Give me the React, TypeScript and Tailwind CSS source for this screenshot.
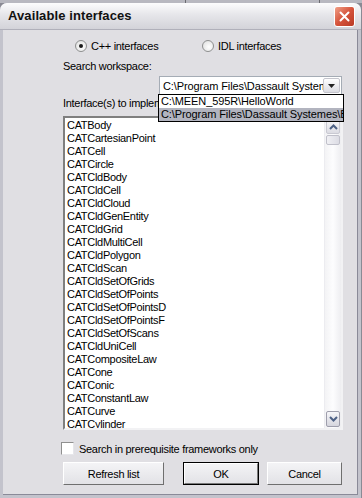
import React from 'react';

const ITEMS = [
  'CATBody', 'CATCartesianPoint', 'CATCell', 'CATCircle', 'CATCldBody', 'CATCldCell',
  'CATCldCloud', 'CATCldGenEntity', 'CATCldGrid', 'CATCldMultiCell', 'CATCldPolygon',
  'CATCldScan', 'CATCldSetOfGrids', 'CATCldSetOfPoints', 'CATCldSetOfPointsD',
  'CATCldSetOfPointsF', 'CATCldSetOfScans', 'CATCldUniCell', 'CATCompositeLaw', 'CATCone',
  'CATConic', 'CATConstantLaw', 'CATCurve', 'CATCylinder',
];

const font = "font-['Liberation_Sans',Arial,sans-serif]";

const Radio = ({ checked, label }: { checked?: boolean; label: string }) => (
  <div className="flex items-center gap-[4px] h-[13px]">
    <div className="w-[12px] h-[12px] rounded-full border border-[#8e8f8f] bg-[radial-gradient(circle_at_60%_60%,#ffffff,#dcdcdc)] flex items-center justify-center">
      {checked && <div className="w-[4px] h-[4px] rounded-full bg-[#1a1a1a]" />}
    </div>
    <span>{label}</span>
  </div>
);

const Chevron = ({ up }: { up?: boolean }) => (
  <svg width="9" height="6" viewBox="0 0 9 6">
    <polyline
      points={up ? '1,5 4.5,1.5 8,5' : '1,1 4.5,4.5 8,1'}
      fill="none"
      stroke="#4d6185"
      strokeWidth="2"
    />
  </svg>
);

const XpButton = ({ label, isDefault, w }: { label: string; isDefault?: boolean; w: string }) => (
  <button
    className={`${w} h-[23px] flex items-center justify-center text-[11px] tracking-[-0.3px] text-black bg-[linear-gradient(#f4f4f6,#e2e2e6)] border ${
      isDefault ? 'border-black' : 'border-t-white border-l-white border-b-[#6f6f6f] border-r-[#6f6f6f]'
    }`}
  >
    <span className={isDefault ? 'border-t border-l border-white w-full h-full flex items-center justify-center border-b border-r border-b-[#7a7a7a] border-r-[#7a7a7a]' : ''}>
      {label}
    </span>
  </button>
);

export default function App() {
  return (
    <div className={`w-[362px] h-[498px] bg-[#8a8a94] overflow-hidden ${font} text-black`}>
      {/* window behind */}
      <div className="h-[3px] flex bg-[#b8b8c0]">
        <div className="w-[186px] border-r border-[#6a6a70]" />
        <div className="w-[134px] border-r border-[#6a6a70]" />
      </div>

      <div className="w-[361px] h-[495px] flex flex-col rounded-t-[7px] overflow-hidden bg-[#c3c3cc]">
        {/* title bar */}
        <div className="h-[27px] shrink-0 flex items-center justify-between pl-[8px] pr-[6px] bg-[linear-gradient(#fcfcfd,#e6e6ea_45%,#d3d3d9)] border-b border-[#b0b0ba]">
          <span className="text-[13px] font-bold text-[#111] tracking-[0.1px]">Available interfaces</span>
          <div className="w-[21px] h-[21px] rounded-[3px] border border-white bg-[linear-gradient(135deg,#f0a088,#d5533b_50%,#b93a25)] flex items-center justify-center">
            <svg width="11" height="11" viewBox="0 0 11 11">
              <path d="M1.5 1.5 L9.5 9.5 M9.5 1.5 L1.5 9.5" stroke="white" strokeWidth="2" strokeLinecap="round" />
            </svg>
          </div>
        </div>

        {/* body */}
        <div className="flex-1 flex border-l-[3px] border-r-[3px] border-b-[3px] border-[#c3c3cc]">
          <div className="flex-1 relative bg-[#e0dfe3] border-r border-b border-[#8a8a98] pl-[60px] text-[11px] tracking-[-0.3px] leading-[12px]">
            {/* radios */}
            <div className="mt-[9px] flex ml-[12px]">
              <div className="w-[127px]">
                <Radio checked label="C++ interfaces" />
              </div>
              <Radio label="IDL interfaces" />
            </div>

            <div className="mt-[8px] h-[12px]">Search workspace:</div>

            {/* combo */}
            <div className="mt-[4px] ml-[96px] w-[183px] h-[19px] bg-white border border-[#a5acb5] flex items-center pl-[3px] pr-[1px] overflow-hidden">
              <span className="flex-1 whitespace-nowrap overflow-hidden tracking-[-0.1px]">C:\Program Files\Dassault System</span>
              <div className="w-[17px] h-[15px] shrink-0 bg-[linear-gradient(#ffffff,#dcdce2)] border border-[#c4c4cc] rounded-[2px] flex items-center justify-center">
                <svg width="7" height="4" viewBox="0 0 7 4">
                  <path d="M0 0 H7 L3.5 4 Z" fill="#222" />
                </svg>
              </div>
            </div>

            <div className="mt-[2px] h-[12px]">Interface(s) to implement:</div>

            {/* listbox */}
            <div className="mt-[7px] w-[280px] h-[314px] bg-white border-2 border-t-[#7f7f7f] border-l-[#7f7f7f] border-b-[#f2f2f4] border-r-[#f2f2f4] flex overflow-hidden">
              <div className="flex-1 pl-[2px] pt-[1px]">
                {ITEMS.map((it) => (
                  <div key={it} className="h-[13px] leading-[13px] whitespace-nowrap">{it}</div>
                ))}
              </div>
              <div className="w-[17px] flex flex-col bg-[linear-gradient(90deg,#f3f3f5,#fdfdfe_50%,#eeeef1)] border-l border-[#ececf0]">
                <div className="h-[15px] mt-[1px] mx-[1px] rounded-[2px] border border-[#c9c9d2] bg-[linear-gradient(#f8f8fa,#dcdce3)] flex items-center justify-center">
                  <Chevron up />
                </div>
                <div className="h-[10px] mt-[1px] mx-[1px] rounded-[2px] border border-[#c0c0ca] bg-[linear-gradient(90deg,#f0f0f4,#dcdce4)]" />
                <div className="flex-1" />
                <div className="h-[16px] mb-[1px] mx-[1px] rounded-[2px] border border-[#9e9eac] bg-[linear-gradient(#f6f6f9,#d6d6de)] flex items-center justify-center">
                  <Chevron />
                </div>
              </div>
            </div>

            {/* checkbox */}
            <div className="mt-[12px] -ml-[2px] flex items-center gap-[5px] h-[13px]">
              <div className="w-[13px] h-[13px] bg-white border border-t-[#8f8f8f] border-l-[#8f8f8f] border-b-[#e6e6ea] border-r-[#e6e6ea]" />
              <span>Search in prerequisite frameworks only</span>
            </div>

            {/* buttons */}
            <div className="mt-[7px] flex">
              <XpButton label="Refresh list" w="w-[101px]" />
              <div className="w-[19px]" />
              <XpButton label="OK" isDefault w="w-[76px]" />
              <div className="w-[8px]" />
              <XpButton label="Cancel" w="w-[75px]" />
            </div>

            {/* open dropdown list */}
            <div className="absolute left-[155px] top-[64px] w-[186px] h-[28px] bg-white border border-black overflow-hidden tracking-[-0.1px]">
              <div className="h-[13px] leading-[13px] pl-[2px] whitespace-nowrap">C:\MEEN_595R\HelloWorld</div>
              <div className="h-[13px] leading-[13px] pl-[2px] whitespace-nowrap bg-[#b2b4bf]">C:\Program Files\Dassault Systemes\B</div>
            </div>
          </div>
        </div>
      </div>
    </div>
  );
}
